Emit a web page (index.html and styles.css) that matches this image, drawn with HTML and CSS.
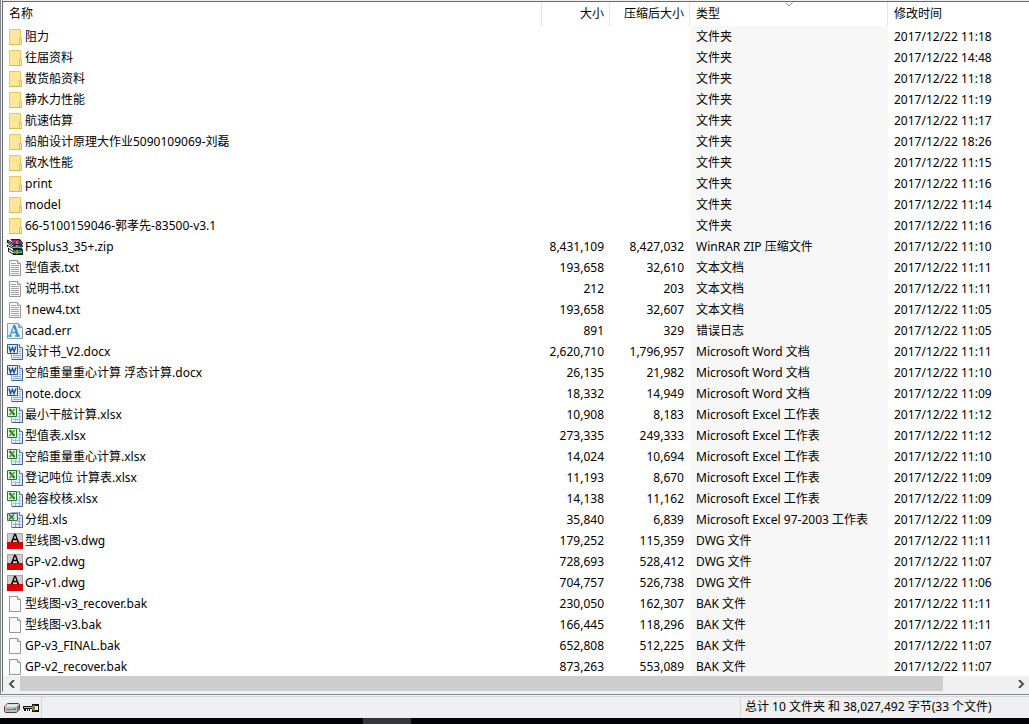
FILE: index.html
```html
<!DOCTYPE html>
<html lang="zh-CN">
<head>
  <meta charset="UTF-8" />
  <meta name="viewport" content="width=device-width, initial-scale=1.0"/>
  <title>WinRAR</title>
  <link rel="stylesheet" href="styles.css">
</head>
<body>
  <!-- icon shapes -->
  <svg class="sprites" aria-hidden="true">
    <symbol id="folder" viewBox="0 0 16 16">
      <path d="M2.5.5h11v15h-11z" fill="#ffe699" stroke="#eac758"/>
      <path d="M12.5 9.500h2v6h-2z" fill="#fff0b8" stroke="#e3bc47"/>
      <path d="M2 15.5h13" stroke="#e3bc47"/>
    </symbol>
    <symbol id="zip" viewBox="0 0 16 16">
      <path d="M3 0h10l3 4v1H6z" fill="#222"/>
      <path d="M3 1h9l2 2H6z" fill="#b0207c"/>
      <path d="M6 4h9" stroke="#e83fae"/>
      <path d="M5 5h10v5H6L4 7z" fill="#123"/>
      <path d="M6 6h10v2H6z" fill="#1b4fa8"/>
      <path d="M6 8.500h9" stroke="#35c7e8"/>
      <path d="M4 10h12v6H6L4 13z" fill="#122"/>
      <path d="M6 11h10v2H6z" fill="#128040"/>
      <path d="M6 13.5h9" stroke="#58d97c"/>
      <path d="M0 1l3-1 3 4v12L1 12v-2l1-1-2-2V5l1-1z" fill="#fff"/>
      <path d="M.5 1L6 4.500M1 2.500l5 3.500M0 6l6 3.500M1 4l5 4M1 9l5 3.500M1 12l5 3M.5 1v3M.5 6v2M1.500 9v3" fill="none" stroke="#111"/>
      <path d="M9 2h2v3H9zM9 6h2v3H9zM9 11h2v4H9z" fill="#b98c2a"/>
    </symbol>
    <symbol id="txt" viewBox="0 0 16 16">
      <path d="M2.5.5h8l3 3v12h-11z" fill="#fafafa" stroke="#969696"/>
      <path d="M10.5.5v3h3" fill="#e8e8e8" stroke="#969696"/>
      <path d="M4 3.500h5M4 5.500h8M4 7.500h8M4 9.500h8M4 11.500h8M4 13.500h8" stroke="#a5a5a5"/>
    </symbol>
    <symbol id="err" viewBox="0 0 16 16">
      <path d="M.5.5h11l4 4v11H.5z" fill="#e8f1f8" stroke="#8b9eac"/>
      <path d="M11.5.5v4h4" fill="#9fc5dd" stroke="#8b9eac"/>
      <path d="M4.500 9.500h5M1 13h4M8 13h5" stroke="#4a98d0" stroke-width="1.5"/>
      <path d="M7 2L3 13" stroke="#4a98d0" stroke-width="1.2"/>
      <path d="M7 2l4 11" stroke="#3289cb" stroke-width="2.2"/>
    </symbol>
    <symbol id="doc" viewBox="0 0 16 16">
      <path d="M4.500.5h8l3 3v12h-11z" fill="#e2ecfa" stroke="#8ea5cc"/>
      <path d="M15.5 4v11.500H5" fill="none" stroke="#3f5f97"/>
      <path d="M12.5.5v3h3" fill="#fff" stroke="#5572a5"/>
      <path d="M12 5.500h2M12 7.500h2M12 9.500h2M6 11.500h8M6 13.500h8" stroke="#8fabd5"/>
      <path d="M.5.5h10v9H.5z" fill="#e8f0fc" stroke="#2858a0"/>
      <path d="M2 2.500l1.500 5 2-4 1.500 4 2-5" fill="none" stroke="#1e4e9b" stroke-width="1.5"/>
    </symbol>
    <symbol id="xls" viewBox="0 0 16 16">
      <path d="M4.500.5h8l3 3v12h-11z" fill="#e2ecfa" stroke="#8ea5cc"/>
      <path d="M15.5 4v11.500H5" fill="none" stroke="#3f5f97"/>
      <path d="M12.5.5v3h3" fill="#fff" stroke="#5572a5"/>
      <path d="M11 6.500h3M11 9.500h3M6 12.500h8M8.500 11v4M12.500 5v10" stroke="#a5bcdd"/>
      <path d="M.5.5h9v9H.5z" fill="#e5f3df" stroke="#28782b"/>
      <path d="M2.500 2l5 6" stroke="#25782b" stroke-width="2"/>
      <path d="M7.500 2l-5 6" stroke="#4b9b42" stroke-width="1.5"/>
    </symbol>
    <symbol id="oldxls" viewBox="0 0 16 16">
      <path d="M4.500.5h8l3 3v12h-11z" fill="#e2ecfa" stroke="#8ea5cc"/>
      <path d="M15.5 4v11.500H5" fill="none" stroke="#3f5f97"/>
      <path d="M12.5.5v3h3" fill="#fff" stroke="#5572a5"/>
      <path d="M11 6.500h3M11 9.500h3M6 12.500h8M8.500 10v5M12.500 5v10" stroke="#8da9cf"/>
      <path d="M.5 1.500h10v7H.5z" fill="#cfe0cc" stroke="#3c7645"/>
      <path d="M2 2.500l5 5M7 2.500l-5 5" stroke="#27793a" stroke-width="1.5"/>
      <path d="M7 3.500h2M8 5.500h1M7 7.500h2" stroke="#fff"/>
    </symbol>
    <symbol id="dwg" viewBox="0 0 16 16">
      <path d="M0 0h16v9H0z" fill="#cfcfcf"/>
      <path d="M0 9h16v7H0z" fill="#dc0000"/>
      <path d="M.5 9V.5h15V9" fill="none" stroke="#a5a5a5"/>
      <path d="M5 8.500L7.500 1.500h1L11 8.500M6 6.500h4M4 8.500h2M10 8.500h2" fill="none" stroke="#000" stroke-width="1.3"/>
    </symbol>
    <symbol id="file" viewBox="0 0 16 16">
      <path d="M2.5.5h8l3 3v12h-11z" fill="#fafafa" stroke="#969696"/>
      <path d="M10.5.5v3h3" fill="#e8e8e8" stroke="#969696"/>
    </symbol>
  </svg>

  <main class="panel">
    <div class="list">
      <table class="files">
        <colgroup><col><col class="w-size"><col class="w-packed"><col class="w-type"><col class="w-date"></colgroup>
        <thead>
          <tr>
            <th>名称</th>
            <th class="num">大小</th>
            <th class="num">压缩后大小</th>
            <th class="sorted">类型<svg class="sort" viewBox="0 0 8 5"><path d="M.5.5L4 4 7.500.5"/></svg></th>
            <th>修改时间</th>
          </tr>
        </thead>
        <tbody>
          <tr><td><svg><use href="#folder"/></svg>阻力</td><td></td><td></td><td>文件夹</td><td>2017/12/22 11:18</td></tr>
          <tr><td><svg><use href="#folder"/></svg>往届资料</td><td></td><td></td><td>文件夹</td><td>2017/12/22 14:48</td></tr>
          <tr><td><svg><use href="#folder"/></svg>散货船资料</td><td></td><td></td><td>文件夹</td><td>2017/12/22 11:18</td></tr>
          <tr><td><svg><use href="#folder"/></svg>静水力性能</td><td></td><td></td><td>文件夹</td><td>2017/12/22 11:19</td></tr>
          <tr><td><svg><use href="#folder"/></svg>航速估算</td><td></td><td></td><td>文件夹</td><td>2017/12/22 11:17</td></tr>
          <tr><td><svg><use href="#folder"/></svg>船舶设计原理大作业5090109069-刘磊</td><td></td><td></td><td>文件夹</td><td>2017/12/22 18:26</td></tr>
          <tr><td><svg><use href="#folder"/></svg>敞水性能</td><td></td><td></td><td>文件夹</td><td>2017/12/22 11:15</td></tr>
          <tr><td><svg><use href="#folder"/></svg>print</td><td></td><td></td><td>文件夹</td><td>2017/12/22 11:16</td></tr>
          <tr><td><svg><use href="#folder"/></svg>model</td><td></td><td></td><td>文件夹</td><td>2017/12/22 11:14</td></tr>
          <tr><td><svg><use href="#folder"/></svg>66-5100159046-郭孝先-83500-v3.1</td><td></td><td></td><td>文件夹</td><td>2017/12/22 11:16</td></tr>
          <tr><td><svg><use href="#zip"/></svg>FSplus3_35+.zip</td><td>8,431,109</td><td>8,427,032</td><td>WinRAR ZIP 压缩文件</td><td>2017/12/22 11:10</td></tr>
          <tr><td><svg><use href="#txt"/></svg>型值表.txt</td><td>193,658</td><td>32,610</td><td>文本文档</td><td>2017/12/22 11:11</td></tr>
          <tr><td><svg><use href="#txt"/></svg>说明书.txt</td><td>212</td><td>203</td><td>文本文档</td><td>2017/12/22 11:11</td></tr>
          <tr><td><svg><use href="#txt"/></svg>1new4.txt</td><td>193,658</td><td>32,607</td><td>文本文档</td><td>2017/12/22 11:05</td></tr>
          <tr><td><svg><use href="#err"/></svg>acad.err</td><td>891</td><td>329</td><td>错误日志</td><td>2017/12/22 11:05</td></tr>
          <tr><td><svg><use href="#doc"/></svg>设计书_V2.docx</td><td>2,620,710</td><td>1,796,957</td><td>Microsoft Word 文档</td><td>2017/12/22 11:11</td></tr>
          <tr><td><svg><use href="#doc"/></svg>空船重量重心计算 浮态计算.docx</td><td>26,135</td><td>21,982</td><td>Microsoft Word 文档</td><td>2017/12/22 11:10</td></tr>
          <tr><td><svg><use href="#doc"/></svg>note.docx</td><td>18,332</td><td>14,949</td><td>Microsoft Word 文档</td><td>2017/12/22 11:09</td></tr>
          <tr><td><svg><use href="#xls"/></svg>最小干舷计算.xlsx</td><td>10,908</td><td>8,183</td><td>Microsoft Excel 工作表</td><td>2017/12/22 11:12</td></tr>
          <tr><td><svg><use href="#xls"/></svg>型值表.xlsx</td><td>273,335</td><td>249,333</td><td>Microsoft Excel 工作表</td><td>2017/12/22 11:12</td></tr>
          <tr><td><svg><use href="#xls"/></svg>空船重量重心计算.xlsx</td><td>14,024</td><td>10,694</td><td>Microsoft Excel 工作表</td><td>2017/12/22 11:10</td></tr>
          <tr><td><svg><use href="#xls"/></svg>登记吨位 计算表.xlsx</td><td>11,193</td><td>8,670</td><td>Microsoft Excel 工作表</td><td>2017/12/22 11:09</td></tr>
          <tr><td><svg><use href="#xls"/></svg>舱容校核.xlsx</td><td>14,138</td><td>11,162</td><td>Microsoft Excel 工作表</td><td>2017/12/22 11:09</td></tr>
          <tr><td><svg><use href="#oldxls"/></svg>分组.xls</td><td>35,840</td><td>6,839</td><td>Microsoft Excel 97-2003 工作表</td><td>2017/12/22 11:09</td></tr>
          <tr><td><svg><use href="#dwg"/></svg>型线图-v3.dwg</td><td>179,252</td><td>115,359</td><td>DWG 文件</td><td>2017/12/22 11:11</td></tr>
          <tr><td><svg><use href="#dwg"/></svg>GP-v2.dwg</td><td>728,693</td><td>528,412</td><td>DWG 文件</td><td>2017/12/22 11:07</td></tr>
          <tr><td><svg><use href="#dwg"/></svg>GP-v1.dwg</td><td>704,757</td><td>526,738</td><td>DWG 文件</td><td>2017/12/22 11:06</td></tr>
          <tr><td><svg><use href="#file"/></svg>型线图-v3_recover.bak</td><td>230,050</td><td>162,307</td><td>BAK 文件</td><td>2017/12/22 11:11</td></tr>
          <tr><td><svg><use href="#file"/></svg>型线图-v3.bak</td><td>166,445</td><td>118,296</td><td>BAK 文件</td><td>2017/12/22 11:11</td></tr>
          <tr><td><svg><use href="#file"/></svg>GP-v3_FINAL.bak</td><td>652,808</td><td>512,225</td><td>BAK 文件</td><td>2017/12/22 11:07</td></tr>
          <tr><td><svg><use href="#file"/></svg>GP-v2_recover.bak</td><td>873,263</td><td>553,089</td><td>BAK 文件</td><td>2017/12/22 11:07</td></tr>
        </tbody>
      </table>
    </div>
    <div class="scrollbar">
      <button aria-label="向左滚动"><svg viewBox="0 0 8 8"><path d="M6 0L2 4l4 4"/></svg></button>
      <div class="track"><div class="thumb"></div></div>
      <button aria-label="向右滚动"><svg viewBox="0 0 8 8"><path d="M2 0l4 4-4 4"/></svg></button>
    </div>
  </main>

  <footer class="status">
    <div class="tools">
      <svg viewBox="0 0 16 10">
        <path d="M3.500.5h11l1 1v5l-3 3h-11l-1-1v-5z" fill="#bdbdbd" stroke="#444"/>
        <path d="M3 1.500h11l-2 2H1z" fill="#f5f5f5"/>
        <path d="M2 6.500h8" stroke="#777"/>
        <path d="M10 5h2v2h-2z" fill="#17a589"/>
        <path d="M13 4l2-2v4l-2 2z" fill="#777"/>
      </svg>
      <svg viewBox="0 0 16 10">
        <path d="M0 3h9V1h7v8H9V6H7v2H6V6H5v2H4V6H3v2H1V6H0z" fill="#161616"/>
        <path d="M1 4.500h9M10 3h2v4h-2z" stroke="#c9ba62" fill="none"/>
        <path d="M12 3h3v4h-3z" fill="#f4eec5"/>
      </svg>
    </div>
    <div class="total">总计 10 文件夹 和 38,027,492 字节(33 个文件)</div>
  </footer>
  <div class="taskbar"><div class="task"></div></div>
</body>
</html>
```
FILE: styles.css
```css
* {
  box-sizing: border-box;
}

body {
  margin: 0;
  height: 100vh;
  display: flex;
  flex-direction: column;
  overflow: hidden;
  background: #f0f0f0;
  color: #000;
  font: 12px/20px "Noto Sans", "Noto Sans CJK SC", sans-serif;
}

.sprites {
  position: absolute;
  width: 0;
  height: 0;
}

.panel {
  flex: 1;
  min-height: 0;
  display: flex;
  flex-direction: column;
  padding-left: 1px;
  border-left: 1px solid #828790;
  border-bottom: 1px solid #828790;
}

.list {
  flex: 1;
  min-height: 0;
  overflow: hidden;
  background: #fff;
  border-top: 1px solid #f0f0f0;
  border-left: 1px solid #696969;
}

.files {
  width: 100%;
  table-layout: fixed;
  border-collapse: separate;
  border-spacing: 0;
  border-top: 1px solid #696969;
}

.w-size { width: 68px; }
.w-packed { width: 80px; }
.w-type { width: 198px; }
.w-date { width: 141px; }

.files th,
.files td {
  padding: 0 6px;
  text-align: left;
  font-weight: normal;
  white-space: nowrap;
}

.files th {
  height: 24px;
  border-right: 1px solid #e5e5e5;
}

.files th.num {
  padding-right: 5px;
}

.files th:last-child {
  border-right: none;
}

.files td {
  height: 21px;
}

.files td:first-child {
  padding-left: 4px;
}

.files td:nth-child(2),
.files td:nth-child(3),
.files .num {
  text-align: right;
}

.files td:nth-child(4) {
  background: #f7f7f7;
}

.files td svg {
  width: 16px;
  height: 16px;
  margin: 2px 2px 0 0;
  vertical-align: top;
}

.sorted {
  position: relative;
}

.sort {
  position: absolute;
  top: 0;
  left: 48%;
  width: 8px;
  height: 5px;
  fill: none;
  stroke: #8a8a8a;
}

.scrollbar {
  height: 16px;
  display: flex;
  background: #f0f0f0;
  border-left: 1px solid #696969;
  border-bottom: 1px solid #f0f0f0;
  margin-bottom: 2px;
}

.scrollbar button {
  width: 17px;
  padding: 0;
  border: none;
  background: none;
  display: flex;
  align-items: center;
  justify-content: center;
}

.scrollbar svg {
  width: 8px;
  height: 8px;
  fill: none;
  stroke: #505050;
  stroke-width: 2;
}

.track {
  flex: 1;
}

.thumb {
  width: 93%;
  height: 100%;
  background: #cdcdcd;
}

.status {
  height: 22px;
  margin-top: 1px;
  display: flex;
  justify-content: space-between;
  border-top: 1px solid #d7d7d7;
}

.tools {
  display: flex;
  align-items: center;
  gap: 3px;
  padding: 0 2px 0 4px;
  border-right: 1px solid #d7d7d7;
}

.tools svg {
  width: 16px;
  height: 10px;
}

.total {
  width: 289px;
  padding-left: 4px;
  border-left: 1px solid #d7d7d7;
}

.taskbar {
  height: 6px;
  background: #02020a;
}

.task {
  width: 48px;
  height: 6px;
  margin-left: 363px;
  background: #35353d;
}
```
